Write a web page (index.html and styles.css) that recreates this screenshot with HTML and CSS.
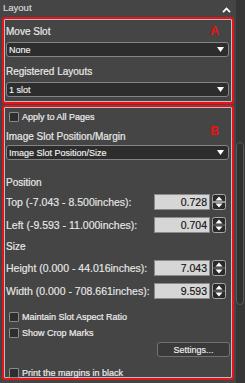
FILE: index.html
```html
<!DOCTYPE html>
<html lang="en">
<head>
    <meta charset="UTF-8">
    <title>Layout</title>
    <link rel="stylesheet" href="styles.css">
</head>
<body>
    <div class="window">
        <div class="panel">
            <div class="panel-header">
                <span>Layout</span>
                <svg class="caret" width="9" height="6" viewBox="0 0 9 6"><polyline points="1,5.2 4.5,1.5 8,5.2" fill="none" stroke="#fff" stroke-width="1.8"/></svg>
            </div>

            <section class="group group-a">
                <span class="tag">A</span>
                <div class="label">Move Slot</div>
                <div class="select">
                    <span>None</span>
                    <svg width="7" height="5" viewBox="0 0 7 5"><polygon points="0,0 7,0 3.5,5" fill="#fff"/></svg>
                </div>
                <div class="label label-gap">Registered Layouts</div>
                <div class="select">
                    <span>1 slot</span>
                    <svg width="7" height="5" viewBox="0 0 7 5"><polygon points="0,0 7,0 3.5,5" fill="#fff"/></svg>
                </div>
            </section>

            <section class="group group-b">
                <span class="tag">B</span>
                <div class="check"><span class="box"></span>Apply to All Pages</div>
                <div class="label label-margin">Image Slot Position/Margin</div>
                <div class="select select-tight">
                    <span>Image Slot Position/Size</span>
                    <svg width="7" height="5" viewBox="0 0 7 5"><polygon points="0,0 7,0 3.5,5" fill="#fff"/></svg>
                </div>

                <div class="label label-position">Position</div>
                <div class="row row-first">
                    <span>Top (-7.043 - 8.500inches):</span>
                    <div class="spin">
                        <div class="value">0.728</div>
                        <svg class="stepper" width="14" height="16" viewBox="0 0 14 16"><rect x="0.5" y="0.5" width="13" height="15" rx="2" fill="#2a2a2a" stroke="#a8a8a8"/><rect x="1" y="7" width="12" height="2" fill="#9a9a9a"/><polygon points="7,2.5 10.5,6.5 3.5,6.5" fill="#fff"/><polygon points="7,13.5 10.5,9.5 3.5,9.5" fill="#fff"/></svg>
                    </div>
                </div>
                <div class="row">
                    <span>Left (-9.593 - 11.000inches):</span>
                    <div class="spin">
                        <div class="value">0.704</div>
                        <svg class="stepper" width="14" height="16" viewBox="0 0 14 16"><rect x="0.5" y="0.5" width="13" height="15" rx="2" fill="#2a2a2a" stroke="#a8a8a8"/><line x1="1" y1="8" x2="13" y2="8" stroke="#777"/><polygon points="7,2.5 10.5,6.5 3.5,6.5" fill="#fff"/><polygon points="7,13.5 10.5,9.5 3.5,9.5" fill="#fff"/></svg>
                    </div>
                </div>

                <div class="label label-size">Size</div>
                <div class="row">
                    <span>Height (0.000 - 44.016inches):</span>
                    <div class="spin">
                        <div class="value">7.043</div>
                        <svg class="stepper" width="14" height="16" viewBox="0 0 14 16"><rect x="0.5" y="0.5" width="13" height="15" rx="2" fill="#2a2a2a" stroke="#a8a8a8"/><line x1="1" y1="8" x2="13" y2="8" stroke="#777"/><polygon points="7,2.5 10.5,6.5 3.5,6.5" fill="#fff"/><polygon points="7,13.5 10.5,9.5 3.5,9.5" fill="#fff"/></svg>
                    </div>
                </div>
                <div class="row">
                    <span>Width (0.000 - 708.661inches):</span>
                    <div class="spin">
                        <div class="value">9.593</div>
                        <svg class="stepper" width="14" height="16" viewBox="0 0 14 16"><rect x="0.5" y="0.5" width="13" height="15" rx="2" fill="#2a2a2a" stroke="#a8a8a8"/><line x1="1" y1="8" x2="13" y2="8" stroke="#777"/><polygon points="7,2.5 10.5,6.5 3.5,6.5" fill="#fff"/><polygon points="7,13.5 10.5,9.5 3.5,9.5" fill="#fff"/></svg>
                    </div>
                </div>

                <div class="check check-maintain"><span class="box"></span>Maintain Slot Aspect Ratio</div>
                <div class="check check-crop"><span class="box"></span>Show Crop Marks</div>
                <button type="button" class="btn-settings">Settings...</button>
                <div class="check check-print"><span class="box"></span>Print the margins in black</div>
            </section>
        </div>
        <div class="scrollbar">
            <div class="thumb"></div>
        </div>
    </div>
</body>
</html>
```

FILE: styles.css
```css
body {
    margin: 0;
    background: #393939;
    font-family: "Liberation Sans", Arial, sans-serif;
    color: #e8e8e8;
}
.window {
    display: flex;
    width: 245px;
    height: 383px;
    overflow: hidden;
}
.panel {
    width: 236px;
    flex-shrink: 0;
    background: #454545;
}
.panel-header {
    display: flex;
    justify-content: space-between;
    align-items: flex-start;
    height: 17px;
    padding: 2px 5px 0 3px;
    box-sizing: border-box;
    font-size: 9.5px;
    line-height: 11px;
    color: #dcdcdc;
    -webkit-text-stroke: 0.15px #dcdcdc;
}
.caret {
    margin-top: 5px;
}
.group {
    position: relative;
    width: 232px;
    margin-left: 2px;
    box-sizing: border-box;
    border: 2px solid #e8121a;
    border-radius: 3px;
    box-shadow: inset 0 0 0 1px #bdbdbd;
    padding: 0 3px 0 2px;
}
.group-a {
    padding-top: 6px;
    padding-bottom: 5px;
}
.group-b {
    margin-top: 1px;
    padding-top: 4px;
}
.tag {
    position: absolute;
    right: 13px;
    top: 6px;
    font-size: 12px;
    line-height: 12px;
    font-weight: bold;
    color: #f01010;
}
.group-b .tag {
    top: 18px;
}
.label {
    font-size: 10px;
    line-height: 13px;
    height: 13px;
    -webkit-text-stroke: 0.2px #e8e8e8;
}
.label-gap {
    margin-top: 8px;
}
.label-margin {
    margin-top: 8px;
}
.label-position {
    margin-top: 16px;
}
.label-size {
    margin-top: 7px;
}
.select {
    display: flex;
    justify-content: space-between;
    align-items: center;
    height: 15px;
    margin-top: 4px;
    padding: 0 4px 0 2px;
    box-sizing: border-box;
    background: #2d2d2d;
    border: 1px solid #858585;
    border-radius: 3px;
    font-size: 9px;
    color: #f2f2f2;
    -webkit-text-stroke: 0.15px #f2f2f2;
}
.select-tight {
    margin-top: 2px;
}
.check {
    display: flex;
    align-items: center;
    height: 11px;
    padding-left: 3px;
    font-size: 9px;
    color: #ececec;
    -webkit-text-stroke: 0.2px #ececec;
}
.check .box {
    width: 10px;
    height: 10px;
    margin-right: 3px;
    box-sizing: border-box;
    background: #2e2e2e;
    border: 1px solid #8c8c8c;
    border-radius: 1px;
}
.check-maintain {
    margin-top: 12px;
}
.check-crop {
    margin-top: 5px;
}
.check-print {
    margin-top: 10px;
}
.row {
    display: flex;
    justify-content: space-between;
    align-items: center;
    height: 16px;
    margin-top: 7px;
    margin-right: 3px;
    font-size: 10.5px;
    -webkit-text-stroke: 0.15px #e8e8e8;
}
.row-first {
    margin-top: 5px;
}
.spin {
    display: flex;
    align-items: center;
}
.value {
    width: 56px;
    height: 16px;
    box-sizing: border-box;
    padding-right: 2px;
    background: #d6d6d6;
    border: 1px solid #8a8a8a;
    text-align: right;
    font-size: 10.5px;
    line-height: 14px;
    color: #111;
    -webkit-text-stroke: 0.15px #111;
}
.stepper {
    display: block;
    margin-left: 2px;
}
.btn-settings {
    display: block;
    width: 73px;
    height: 15px;
    margin: 4px -1px 0 auto;
    padding: 0;
    background: #3a3a3a;
    border: 1px solid #727272;
    border-radius: 3px;
    font-family: "Liberation Sans", Arial, sans-serif;
    font-size: 9px;
    color: #f0f0f0;
    -webkit-text-stroke: 0.15px #f0f0f0;
}
.scrollbar {
    flex: 1;
    background: #363636;
    padding-top: 142px;
}
.thumb {
    width: 8px;
    height: 163px;
    box-sizing: border-box;
    background: #303030;
    border: 1px solid #5a5a5a;
    border-radius: 4px;
}
```
